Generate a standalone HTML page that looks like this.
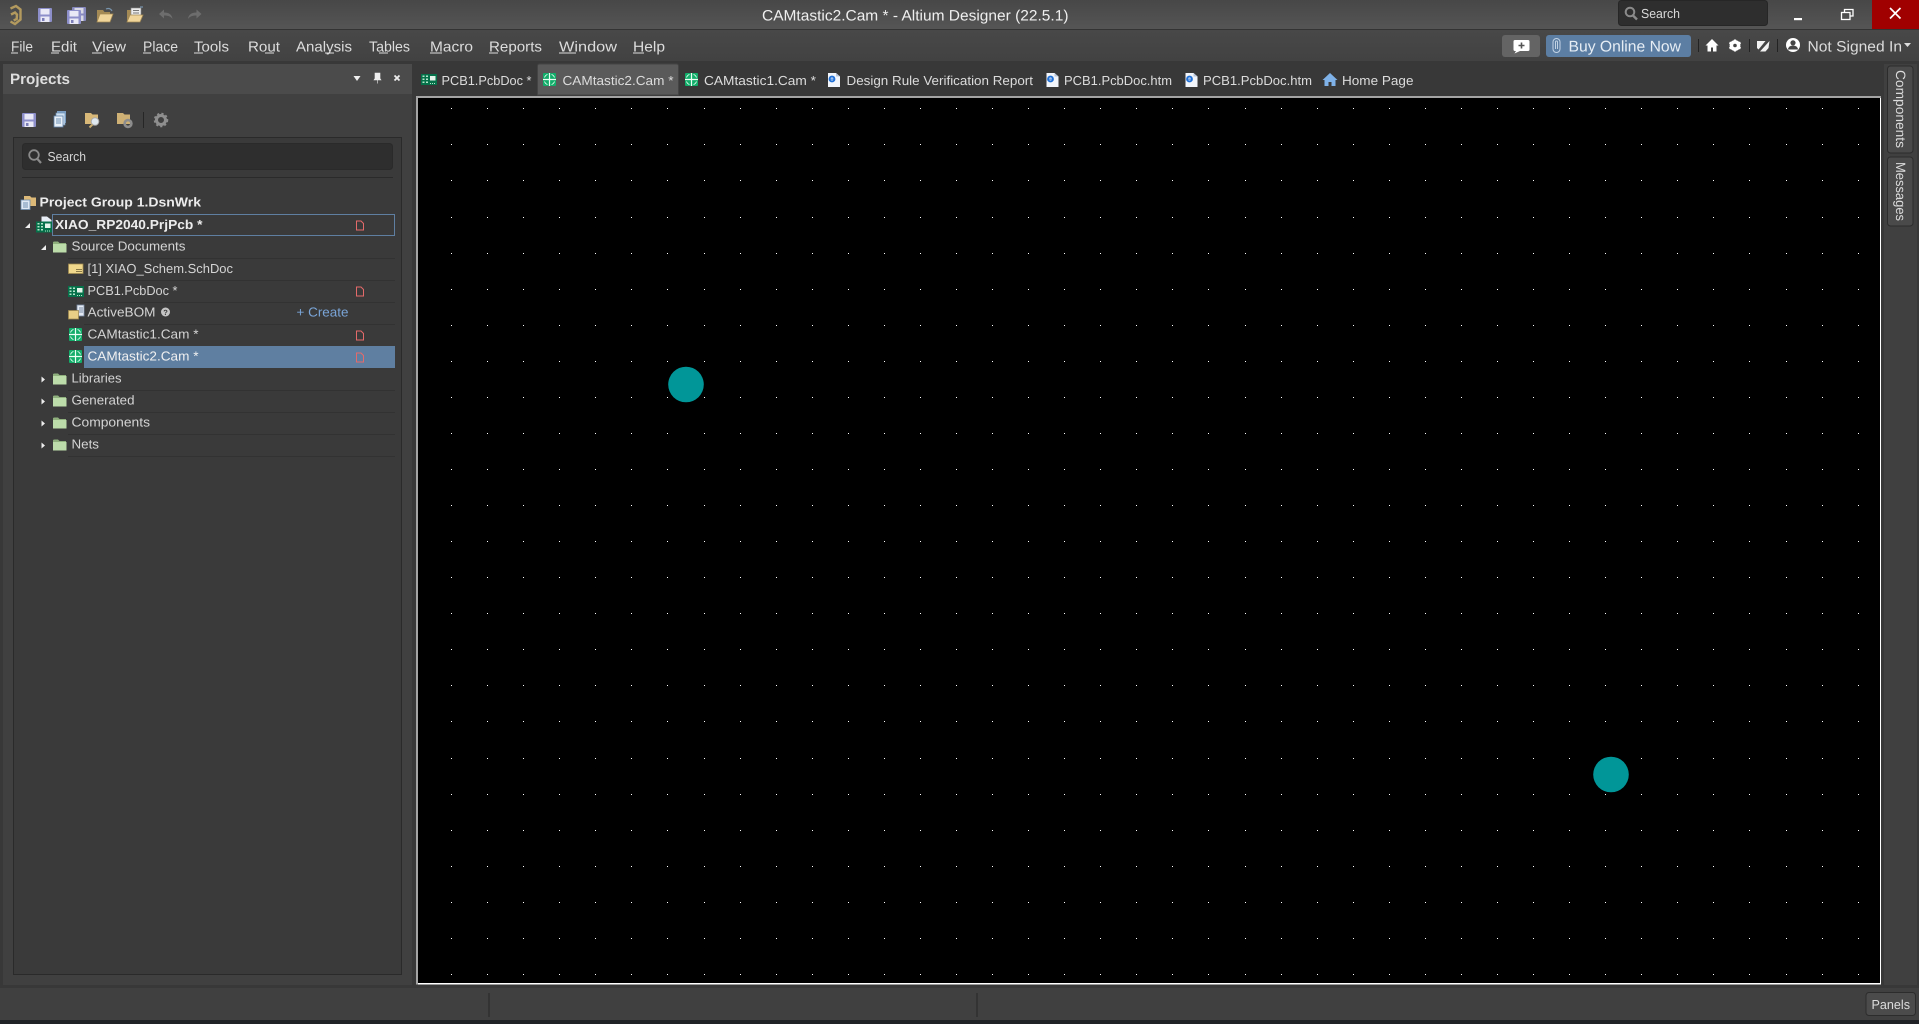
<!DOCTYPE html>
<html><head><meta charset="utf-8"><title>CAMtastic2.Cam * - Altium Designer (22.5.1)</title>
<style>
html,body{margin:0;padding:0;background:#383838;overflow:hidden;width:1919px;height:1024px}
svg{display:block}
text{font-family:"Liberation Sans",sans-serif;text-rendering:geometricPrecision;white-space:pre}
.m{font-size:14.5px;fill:#dcdcdc}
.t{font-size:13px;fill:#d4d4d4}
.b{font-size:13px;font-weight:bold;fill:#ececec}
.tab{font-size:13px;fill:#dcdcdc}
.u{fill:#dcdcdc}
.ln{fill:#323232}
</style></head><body>
<svg width="1919" height="1024" viewBox="0 0 1919 1024" xmlns="http://www.w3.org/2000/svg">
<defs>
<linearGradient id="gt" x1="0" y1="0" x2="0" y2="1"><stop offset="0" stop-color="#474747"/><stop offset="1" stop-color="#555"/></linearGradient>
<linearGradient id="gm" x1="0" y1="0" x2="0" y2="1"><stop offset="0" stop-color="#484848"/><stop offset="1" stop-color="#424242"/></linearGradient>
<path id="r" stroke="#fff" stroke-width="1" shape-rendering="crispEdges" d="M451 108.5h1M487 108.5h1M523 108.5h1M559 108.5h1M595 108.5h1M631 108.5h1M667 108.5h1M704 108.5h1M740 108.5h1M776 108.5h1M812 108.5h1M848 108.5h1M884 108.5h1M920 108.5h1M956 108.5h1M992 108.5h1M1028 108.5h1M1064 108.5h1M1100 108.5h1M1136 108.5h1M1172 108.5h1M1208 108.5h1M1245 108.5h1M1281 108.5h1M1317 108.5h1M1353 108.5h1M1389 108.5h1M1425 108.5h1M1461 108.5h1M1497 108.5h1M1533 108.5h1M1569 108.5h1M1605 108.5h1M1641 108.5h1M1677 108.5h1M1713 108.5h1M1749 108.5h1M1786 108.5h1M1822 108.5h1M1858 108.5h1"/>
<g id="save"><rect width="14" height="14" rx="1" fill="#8d8fca"/><rect x="2.5" y="1" width="9" height="5.5" fill="#e9e9f6"/><rect x="2.5" y="8.5" width="9" height="5.5" fill="#e9e9f6"/><rect x="4" y="10" width="2.5" height="3" fill="#7c7eb8"/></g>
<g id="oldr"><path d="M0 2h6l1.5 2H13v3H3L0 14z" fill="#a48a55"/><path d="M0 14L3 6h13l-3 8z" fill="#f0d59a" stroke="#a48a55" stroke-width=".8"/></g>
<g id="fold"><path d="M0 1Q0 0 1.500 0H5L6.500 1.500H13V11H0z" fill="#8fb07d"/><rect x="0" y="2.500" width="13.500" height="8.500" fill="#bcdcaa"/></g>
<g id="reddoc"><path d="M.5.5H5L7.500 3V9.500H.5z" fill="none" stroke="#e46a6a" stroke-width="1"/></g>
<g id="pcb"><rect width="16" height="11" fill="#06714a"/><rect x="1.500" y="1.500" width="2" height="1.500" fill="#b5e6cc"/><rect x="1.500" y="4.500" width="2" height="1.500" fill="#b5e6cc"/><rect x="1.500" y="7.500" width="2" height="1.500" fill="#b5e6cc"/><rect x="5" y="1.500" width="2" height="1.500" fill="#b5e6cc"/><rect x="5" y="4.500" width="2" height="1.500" fill="#b5e6cc"/><rect x="5" y="7.500" width="2" height="1.500" fill="#b5e6cc"/><rect x="9" y="2" width="5.500" height="4.500" fill="#e4f4ea"/><path d="M9 9.500h1M11 9.500h1M13 9.500h1" stroke="#b5e6cc"/></g>
<g id="cam"><rect width="13" height="13" rx="1" fill="#12ad6a"/><path d="M1.500 4.500Q2.500 2 4.500 1.500M8.500 1.500Q10.500 2 11.500 4.500M11.500 8.500Q10.500 11 8.500 11.500M4.500 11.500Q2.500 11 1.500 8.500" fill="none" stroke="#eafff4" stroke-width=".9"/><path d="M6.500 0V13M0 6.500H13" stroke="#eafff4" stroke-width="1.200"/></g>
<g id="ie"><path d="M0 0H8L12 3.500V14H0z" fill="#f2f5fb"/><path d="M8 0L12 3.500H8z" fill="#b9c6da"/><circle cx="4" cy="6" r="3.400" fill="#1e6fd6"/><circle cx="4" cy="6" r="1.500" fill="#f2f5fb"/><rect x="2.500" y="5.600" width="3.500" height="1" fill="#1e6fd6"/></g>
</defs>

<!-- base -->
<rect width="1919" height="1024" fill="#383838"/>
<rect width="1919" height="29" fill="url(#gt)"/>
<rect y="29" width="1919" height="1" fill="#333"/>
<rect y="30" width="1919" height="31" fill="url(#gm)"/>

<!-- logo / quick toolbar -->
<path d="M10.500 8.500L16 6l4.500 3.500v10L15 24l-4.500-2.500M11 14.500l4-2 2 2-.3 4.500-3 1.500" fill="none" stroke="#b39a5e" stroke-width="2.400"/>
<use href="#save" x="38" y="8"/>
<use href="#save" x="72" y="7" opacity=".9"/><use href="#save" x="67" y="10"/>
<use href="#oldr" x="97" y="8"/>
<path d="M106 9q4-1.500 6 2" fill="none" stroke="#7894ad" stroke-width="1.200"/>
<path d="M127 10h6l1.500 2H140v3h-10l-3 7z" fill="#a48a55"/>
<rect x="131" y="8" width="10" height="8" fill="#ececec" stroke="#888" stroke-width=".6"/><path d="M133 10.500h6M133 13h6" stroke="#777"/>
<path d="M127 22L130 15h13l-3 7z" fill="#f0d59a" stroke="#a48a55" stroke-width=".8"/>
<path d="M140 7h3" stroke="#7894ad" stroke-width="1.200"/>
<path d="M159 14l5-4.500v3c5 0 8 2 8.500 6.500-2-3-5-3.500-8.500-3.500v3z" fill="#6d6d6d"/>
<path d="M201.500 14l-5-4.500v3c-5 0-8 2-8.500 6.500 2-3 5-3.500 8.500-3.500v3z" fill="#6d6d6d"/>

<text x="762" y="20.500" font-size="15" fill="#efefef" textLength="306.500" lengthAdjust="spacingAndGlyphs">CAMtastic2.Cam * - Altium Designer (22.5.1)</text>

<!-- title right -->
<rect x="1618.500" y=".5" width="149" height="25" rx="3" fill="#2e2e2e" stroke="#262626"/>
<circle cx="1630" cy="12" r="4.300" fill="none" stroke="#8a8a8a" stroke-width="2"/><path d="M1633 15.500l4 4" stroke="#8a8a8a" stroke-width="2.400"/>
<text x="1641" y="18" font-size="13" fill="#d8d8d8" textLength="39" lengthAdjust="spacingAndGlyphs">Search</text>
<rect x="1794" y="18" width="8" height="2.200" fill="#fff"/>
<rect x="1841.500" y="12.500" width="8.500" height="7" fill="none" stroke="#fff" stroke-width="1.300"/><path d="M1844.500 12.500V9.500H1853V16H1850" fill="none" stroke="#fff" stroke-width="1.300"/>
<rect x="1872" width="47" height="29" fill="#a00000"/>
<path d="M1890 8l10.500 10.500M1900.500 8L1890 18.500" stroke="#fff" stroke-width="1.700"/>

<!-- menu -->
<text class="m" x="11" y="51.500" textLength="22" lengthAdjust="spacingAndGlyphs">File</text><rect class="u" x="11" y="52.500" width="7" height="1"/>
<text class="m" x="51" y="51.500" textLength="26" lengthAdjust="spacingAndGlyphs">Edit</text><rect class="u" x="51" y="52.500" width="8" height="1"/>
<text class="m" x="92" y="51.500" textLength="34" lengthAdjust="spacingAndGlyphs">View</text><rect class="u" x="92" y="52.500" width="10" height="1"/>
<text class="m" x="143" y="51.500" textLength="35" lengthAdjust="spacingAndGlyphs">Place</text><rect class="u" x="143" y="52.500" width="8" height="1"/>
<text class="m" x="194" y="51.500" textLength="35" lengthAdjust="spacingAndGlyphs">Tools</text><rect class="u" x="194" y="52.500" width="9" height="1"/>
<text class="m" x="248" y="51.500" textLength="32" lengthAdjust="spacingAndGlyphs">Rout</text><rect class="u" x="265" y="52.500" width="9" height="1"/>
<text class="m" x="296" y="51.500" textLength="56" lengthAdjust="spacingAndGlyphs">Analysis</text><rect class="u" x="325" y="52.500" width="9" height="1"/>
<text class="m" x="369" y="51.500" textLength="41" lengthAdjust="spacingAndGlyphs">Tables</text><rect class="u" x="379" y="52.500" width="9" height="1"/>
<text class="m" x="430" y="51.500" textLength="43" lengthAdjust="spacingAndGlyphs">Macro</text><rect class="u" x="430" y="52.500" width="12" height="1"/>
<text class="m" x="489" y="51.500" textLength="53" lengthAdjust="spacingAndGlyphs">Reports</text><rect class="u" x="489" y="52.500" width="9" height="1"/>
<text class="m" x="559" y="51.500" textLength="58" lengthAdjust="spacingAndGlyphs">Window</text><rect class="u" x="559" y="52.500" width="17" height="1"/>
<text class="m" x="633" y="51.500" textLength="32" lengthAdjust="spacingAndGlyphs">Help</text><rect class="u" x="633" y="52.500" width="11" height="1"/>

<!-- menu right -->
<rect x="1502" y="35" width="38" height="22" rx="3" fill="#646464"/>
<path d="M1515 40h13a1.500 1.500 0 0 1 1.500 1.500v8a1.500 1.500 0 0 1-1.500 1.500h-8l-5.500 2.500 1.500-2.500h-1a1.500 1.500 0 0 1-1.500-1.500v-8a1.500 1.500 0 0 1 1.500-1.500z" fill="#fff"/>
<path d="M1521.500 42.500v6M1518.500 45.500h6" stroke="#555" stroke-width="1.600"/>
<rect x="1546" y="35" width="145" height="22" rx="3" fill="#5c7ea3"/>
<path d="M1553 49v-7a3.500 3.500 0 0 1 7 0v7a3.500 3.500 0 0 1-7 0zM1555.500 49v-7a1 1 0 0 1 2 0v7" fill="none" stroke="#c3d3e4" stroke-width="1"/>
<text x="1568.500" y="51.500" font-size="15.500" fill="#e6edf4" textLength="112.500" lengthAdjust="spacingAndGlyphs">Buy Online Now</text>
<rect x="1698" y="39" width="1" height="13" fill="#232323"/>
<path d="M1712 39l-6.500 6.500h2v6h3.500v-4h2v4h3.500v-6h2z" fill="#fff"/>
<circle cx="1735" cy="45.500" r="3.600" fill="none" stroke="#fff" stroke-width="3.600"/>
<path d="M1735 39.500v2.500M1735 49v2.500M1729.500 42.500l2.200 1.300M1738.300 47.200l2.200 1.300M1729.500 48.500l2.200-1.300M1738.300 43.800l2.200-1.300" stroke="#fff" stroke-width="2.200"/>
<rect x="1749" y="39" width="1" height="13" fill="#232323"/>
<path d="M1757 41h8.500l-7 8.500-1.500-1.500zM1769.500 41l-9.500 10.500h5.500l3-3.500z" fill="#f2f2f2"/>
<rect x="1777" y="39" width="1" height="13" fill="#232323"/>
<circle cx="1793" cy="45" r="7" fill="#fff"/><circle cx="1793" cy="42.800" r="2.600" fill="#444"/><path d="M1788 49.500a5 4 0 0 1 10 0z" fill="#444"/>
<text x="1807.500" y="51.500" font-size="15" fill="#dcdcdc" textLength="94.500" lengthAdjust="spacingAndGlyphs">Not Signed In</text>
<path d="M1904 43h7l-3.500 4z" fill="#ddd"/>

<!-- projects panel -->
<rect x="3" y="64" width="409" height="921" fill="#404040"/>
<rect x="3" y="64" width="409" height="30" fill="#4b4b4b"/>
<text x="10" y="84" font-size="15" font-weight="bold" fill="#dedede" textLength="60" lengthAdjust="spacingAndGlyphs">Projects</text>
<path d="M353.500 76h7l-3.500 5z" fill="#eee"/>
<path d="M375 73h5v5.500l1 1.500h-7l1-1.500zM377.500 80v3.500" fill="#eee" stroke="#eee" stroke-width=".6"/>
<path d="M394.500 75.500l5 5M399.500 75.500l-5 5" stroke="#eee" stroke-width="1.800"/>

<use href="#save" x="22" y="113"/>
<rect x="57" y="111" width="9" height="12" fill="#7d9fc4"/><rect x="56" y="113" width="9" height="12" fill="#cfe0f0" stroke="#6d8fb4" stroke-width=".7"/><rect x="54" y="116" width="9" height="11" fill="#e8f0f8" stroke="#5f83a9" stroke-width=".8"/><path d="M56 119h5M56 121h5M56 123h5" stroke="#6d8fb4"/>
<path d="M85 113h6l1.500 1.500H98V124H85z" fill="#d8b878"/><circle cx="95" cy="121.500" r="3.800" fill="#dfe8ef" stroke="#aaa"/><path d="M92.500 124.500l-3 3" stroke="#c8ac70" stroke-width="2"/>
<path d="M117 113h6l1.500 1.500H130V124H117z" fill="#cfb175"/><circle cx="128" cy="123.500" r="3.400" fill="none" stroke="#8d8d8d" stroke-width="2.600"/>
<rect x="143" y="112" width="1" height="16" fill="#262626"/>
<circle cx="161" cy="120" r="4.500" fill="none" stroke="#8f8f8f" stroke-width="3"/><circle cx="161" cy="120" r="6.500" fill="none" stroke="#8f8f8f" stroke-width="1.500" stroke-dasharray="2.200 2.200"/>

<!-- tree box -->
<rect x="13.500" y="137.500" width="388" height="837" fill="#3a3a3a" stroke="#2a2a2a"/>
<rect x="22.500" y="143.500" width="370" height="26" rx="3" fill="#2e2e2e" stroke="#2a2a2a"/>
<circle cx="34" cy="155" r="4.800" fill="none" stroke="#8a8a8a" stroke-width="1.800"/><path d="M37.500 159l3.500 4" stroke="#8a8a8a" stroke-width="2.200"/>
<text x="47.500" y="161" class="t" textLength="38.500" lengthAdjust="spacingAndGlyphs">Search</text>
<rect x="22" y="177" width="371" height="1" fill="#2a2a2a"/>

<!-- row lines -->
<rect class="ln" x="68" y="258" width="327" height="1"/>
<rect class="ln" x="84" y="280" width="311" height="1"/>
<rect class="ln" x="84" y="302" width="311" height="1"/>
<rect class="ln" x="84" y="324" width="311" height="1"/>
<rect x="84" y="346" width="311" height="22" fill="#5f7fa1"/>
<rect class="ln" x="68" y="390" width="327" height="1"/>
<rect class="ln" x="68" y="412" width="327" height="1"/>
<rect class="ln" x="68" y="434" width="327" height="1"/>
<rect class="ln" x="68" y="456" width="327" height="1"/>

<!-- group row -->
<path d="M24 196h6l1.500 1.500H36V206H24z" fill="#dcb978"/><rect x="21" y="200" width="9" height="9.500" fill="#dfe9f4" stroke="#6f8fb0" stroke-width=".8"/><path d="M23 203h5M23 205h5M23 207h5" stroke="#6f8fb0"/>
<text x="39.500" y="206.500" class="b" textLength="161.500" lengthAdjust="spacingAndGlyphs">Project Group 1.DsnWrk</text>

<!-- xiao row -->
<path d="M30 223v5h-5z" fill="#eee"/>
<path d="M41.500 216.500H47L51.500 220V229H41.500z" fill="#e8edf5"/><use href="#pcb" x="36" y="221.500"/>
<rect x="52.500" y="214.500" width="342" height="21" fill="none" stroke="#5f7fa1"/>
<text x="55" y="229" class="b" fill="#f2f2f2" textLength="147.500" lengthAdjust="spacingAndGlyphs">XIAO_RP2040.PrjPcb *</text>
<use href="#reddoc" x="356" y="220.500"/>

<!-- source docs -->
<path d="M46 245v5h-5z" fill="#eee"/>
<use href="#fold" x="53" y="241.500"/>
<text x="71.500" y="250.500" class="t" textLength="114" lengthAdjust="spacingAndGlyphs">Source Documents</text>

<path d="M68.500 264h14.500v9.500H68.500z" fill="#f0d88c" stroke="#a08a50" stroke-width=".8"/><path d="M76 269.500h6M76 271.500h6" stroke="#8a7a48"/>
<text x="87.500" y="273" class="t" textLength="145.500" lengthAdjust="spacingAndGlyphs">[1] XIAO_Schem.SchDoc</text>

<use href="#pcb" x="68" y="286"/>
<text x="87.500" y="295" class="t" textLength="90" lengthAdjust="spacingAndGlyphs">PCB1.PcbDoc *</text>
<use href="#reddoc" x="356" y="286.500"/>

<rect x="77" y="305" width="7" height="11" fill="#e4eaf4" stroke="#7a8ca4" stroke-width=".8"/><path d="M79 308h4M79 310h4M79 312h4" stroke="#7a8ca4"/>
<path d="M68.500 310.500h10v8.500h-10z" fill="#e9cf86" stroke="#a08a50" stroke-width=".8"/>
<text x="87.500" y="316.500" class="t" textLength="68" lengthAdjust="spacingAndGlyphs">ActiveBOM</text>
<circle cx="165.500" cy="312" r="4.500" fill="#c4c4c4"/><text x="163.300" y="315" font-size="7.500" font-weight="bold" fill="#3a3a3a">?</text>
<text x="296.500" y="316.500" font-size="13" fill="#7aa5d8" textLength="52" lengthAdjust="spacingAndGlyphs">+ Create</text>

<use href="#cam" x="69" y="328"/>
<text x="87.500" y="338.500" class="t" textLength="111" lengthAdjust="spacingAndGlyphs">CAMtastic1.Cam *</text>
<use href="#reddoc" x="356" y="330.500"/>

<use href="#cam" x="69" y="350"/>
<text x="87.500" y="360.500" class="t" style="fill:#f0f0f0" textLength="111" lengthAdjust="spacingAndGlyphs">CAMtastic2.Cam *</text>
<use href="#reddoc" x="356" y="352.500"/>

<path d="M41.500 376.500v6l3.500-3z" fill="#eee"/><use href="#fold" x="53" y="373.500"/>
<text x="71.500" y="382.500" class="t" textLength="50" lengthAdjust="spacingAndGlyphs">Libraries</text>
<path d="M41.500 398.500v6l3.500-3z" fill="#eee"/><use href="#fold" x="53" y="395.500"/>
<text x="71.500" y="404.500" class="t" textLength="63" lengthAdjust="spacingAndGlyphs">Generated</text>
<path d="M41.500 420.500v6l3.500-3z" fill="#eee"/><use href="#fold" x="53" y="417.500"/>
<text x="71.500" y="426.500" class="t" textLength="78.500" lengthAdjust="spacingAndGlyphs">Components</text>
<path d="M41.500 442.500v6l3.500-3z" fill="#eee"/><use href="#fold" x="53" y="439.500"/>
<text x="71.500" y="448.500" class="t" textLength="27.500" lengthAdjust="spacingAndGlyphs">Nets</text>

<!-- tabs -->
<use href="#pcb" x="421" y="74"/>
<text class="tab" x="441.500" y="85" textLength="90" lengthAdjust="spacingAndGlyphs">PCB1.PcbDoc *</text>
<path d="M537.500 95V66a2 2 0 0 1 2-2h137a2 2 0 0 1 2 2v29z" fill="#5a5a5a" stroke="#444"/>
<use href="#cam" x="543" y="73"/>
<text class="tab" x="562.500" y="85" textLength="111" lengthAdjust="spacingAndGlyphs">CAMtastic2.Cam *</text>
<use href="#cam" x="685" y="73"/>
<text class="tab" x="704" y="85" textLength="112" lengthAdjust="spacingAndGlyphs">CAMtastic1.Cam *</text>
<use href="#ie" x="828" y="73"/>
<text class="tab" x="846.500" y="85" textLength="186.500" lengthAdjust="spacingAndGlyphs">Design Rule Verification Report</text>
<use href="#ie" x="1046.500" y="73"/>
<text class="tab" x="1064" y="85" textLength="108" lengthAdjust="spacingAndGlyphs">PCB1.PcbDoc.htm</text>
<use href="#ie" x="1185.500" y="73"/>
<text class="tab" x="1203" y="85" textLength="109" lengthAdjust="spacingAndGlyphs">PCB1.PcbDoc.htm</text>
<path d="M1330 73l-7.500 7h2v6h4v-4h3v4h4v-6h2z" fill="#7fb2e8"/>
<text class="tab" x="1342" y="85" textLength="71.500" lengthAdjust="spacingAndGlyphs">Home Page</text>

<!-- canvas -->
<rect x="416" y="96" width="1465" height="888.500" fill="#fff"/>
<path d="M416 96H1881V98H418V984.500H416z" fill="#a4a4a4"/>
<rect x="418" y="98" width="1462" height="885" fill="#000"/>
<use href="#r"/><use href="#r" y="36"/><use href="#r" y="72"/><use href="#r" y="109"/><use href="#r" y="145"/><use href="#r" y="181"/><use href="#r" y="217"/><use href="#r" y="253"/><use href="#r" y="289"/><use href="#r" y="325"/><use href="#r" y="361"/><use href="#r" y="397"/><use href="#r" y="433"/><use href="#r" y="469"/><use href="#r" y="505"/><use href="#r" y="541"/><use href="#r" y="577"/><use href="#r" y="613"/><use href="#r" y="650"/><use href="#r" y="686"/><use href="#r" y="722"/><use href="#r" y="758"/><use href="#r" y="794"/><use href="#r" y="830"/><use href="#r" y="866"/>
<circle cx="686" cy="384.500" r="17.800" fill="#019698"/>
<circle cx="1611" cy="774.500" r="17.800" fill="#019698"/>

<!-- right strip -->
<rect x="1884" y="64" width="33" height="921" fill="#404040"/>
<rect x="1887.500" y="66" width="25.500" height="87" rx="3" fill="#4a4a4a" stroke="#2c2c2c"/>
<rect x="1887.500" y="157" width="25.500" height="69" rx="3" fill="#4a4a4a" stroke="#2c2c2c"/>
<text transform="translate(1896,70) rotate(90)" font-size="13.500" fill="#dcdcdc" textLength="78" lengthAdjust="spacingAndGlyphs">Components</text>
<text transform="translate(1896,162) rotate(90)" font-size="13.500" fill="#dcdcdc" textLength="59" lengthAdjust="spacingAndGlyphs">Messages</text>

<!-- status bar -->
<rect y="988" width="1919" height="32" fill="#404040"/>
<rect x="488" y="993" width="2" height="24" fill="#333"/>
<rect x="976" y="993" width="2" height="24" fill="#333"/>
<rect y="1020" width="1919" height="4" fill="#202226"/>
<rect x="1866" y="992.500" width="49.500" height="23" rx="3" fill="#4b4b4b" stroke="#2c2c2c"/>
<text x="1871.500" y="1009" font-size="13" fill="#dcdcdc" textLength="38.500" lengthAdjust="spacingAndGlyphs">Panels</text>
</svg>
</body></html>
